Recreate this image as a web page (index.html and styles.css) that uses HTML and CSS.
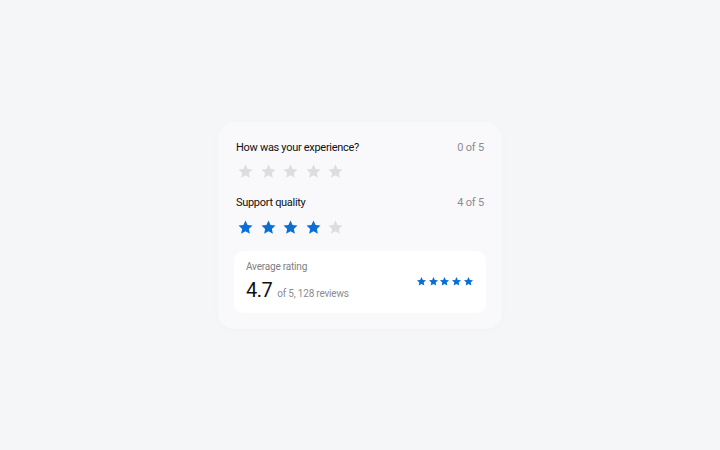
FILE: index.html
```html
<!DOCTYPE html>
<html lang="en">
<head>
<meta charset="utf-8">
<title>Rating</title>
<link rel="stylesheet" href="styles.css">
</head>
<body>
<svg width="0" height="0" class="defs" aria-hidden="true">
  <defs>
    <path id="star" d="M12 2.2l2.95 6.35 6.95.78-5.16 4.72 1.42 6.85L12 17.4l-6.16 3.5 1.42-6.85L2.1 9.33l6.95-.78z"/>
  </defs>
</svg>
<main class="card">
  <section class="question">
    <div class="q-head">
      <span class="q-title">How was your experience?</span>
      <span class="q-count">0 of 5</span>
    </div>
    <div class="stars">
      <svg class="star" viewBox="0 0 24 24"><use href="#star"/></svg>
      <svg class="star" viewBox="0 0 24 24"><use href="#star"/></svg>
      <svg class="star" viewBox="0 0 24 24"><use href="#star"/></svg>
      <svg class="star" viewBox="0 0 24 24"><use href="#star"/></svg>
      <svg class="star" viewBox="0 0 24 24"><use href="#star"/></svg>
    </div>
  </section>
  <section class="question">
    <div class="q-head">
      <span class="q-title">Support quality</span>
      <span class="q-count">4 of 5</span>
    </div>
    <div class="stars">
      <svg class="star on" viewBox="0 0 24 24"><use href="#star"/></svg>
      <svg class="star on" viewBox="0 0 24 24"><use href="#star"/></svg>
      <svg class="star on" viewBox="0 0 24 24"><use href="#star"/></svg>
      <svg class="star on" viewBox="0 0 24 24"><use href="#star"/></svg>
      <svg class="star" viewBox="0 0 24 24"><use href="#star"/></svg>
    </div>
  </section>
  <section class="summary">
    <div class="summary-text">
      <div class="summary-label">Average rating</div>
      <div class="summary-value">
        <span class="score">4.7</span>
        <span class="score-meta">of 5, 128 reviews</span>
      </div>
    </div>
    <div class="mini-stars">
      <svg class="mini on" viewBox="0 0 24 24"><use href="#star"/></svg>
      <svg class="mini on" viewBox="0 0 24 24"><use href="#star"/></svg>
      <svg class="mini on" viewBox="0 0 24 24"><use href="#star"/></svg>
      <svg class="mini on" viewBox="0 0 24 24"><use href="#star"/></svg>
      <svg class="mini on" viewBox="0 0 24 24"><use href="#star"/></svg>
    </div>
  </section>
</main>
</body>
</html>
```

FILE: styles.css
```css
* { box-sizing: border-box; }

html, body {
  margin: 0;
  height: 100%;
}

body {
  background: #f5f6f8;
  font-family: "Roboto", "Noto Sans", sans-serif;
  color: #1c1c1e;
  display: flex;
  align-items: center;
  justify-content: center;
}

.defs {
  position: absolute;
  width: 0;
  height: 0;
}

.card {
  width: 284px;
  background: #f9f9fb;
  border-radius: 16px;
  padding: 18px 18px 16px;
  box-shadow: 0 2px 10px rgba(20, 30, 60, 0.02);
}

.question + .question {
  margin-top: 15px;
}

.q-head {
  display: flex;
  justify-content: space-between;
  align-items: center;
  height: 16px;
  line-height: 16px;
}

.q-title {
  font-size: 11px;
  font-weight: 400;
  letter-spacing: -0.3px;
  color: #111113;
}

.q-count {
  font-size: 11px;
  letter-spacing: -0.2px;
  color: #8b8c90;
}

.stars {
  display: flex;
  gap: 5.5px;
  margin-top: 7.5px;
  padding-left: 1px;
  height: 17px;
}

.star {
  width: 17px;
  height: 17px;
  fill: #dcdde0;
}

.star.on,
.mini.on {
  fill: #0a6fd4;
}

.summary {
  margin: 15px -2px 0;
  background: #ffffff;
  border-radius: 10px;
  padding: 10px 12px 11px;
  display: flex;
  justify-content: space-between;
  align-items: center;
}

.summary-label {
  font-size: 10px;
  line-height: 12px;
  letter-spacing: -0.2px;
  color: #7f8085;
}

.summary-value {
  margin-top: 5px;
  display: flex;
  align-items: baseline;
  gap: 5px;
  line-height: 24px;
  height: 24px;
}

.score {
  font-size: 20px;
  letter-spacing: -0.5px;
  color: #111113;
}

.score-meta {
  font-size: 10px;
  letter-spacing: -0.2px;
  color: #8b8c90;
}

.mini-stars {
  display: flex;
  gap: 0.8px;
}

.mini {
  width: 11px;
  height: 11px;
}
```
